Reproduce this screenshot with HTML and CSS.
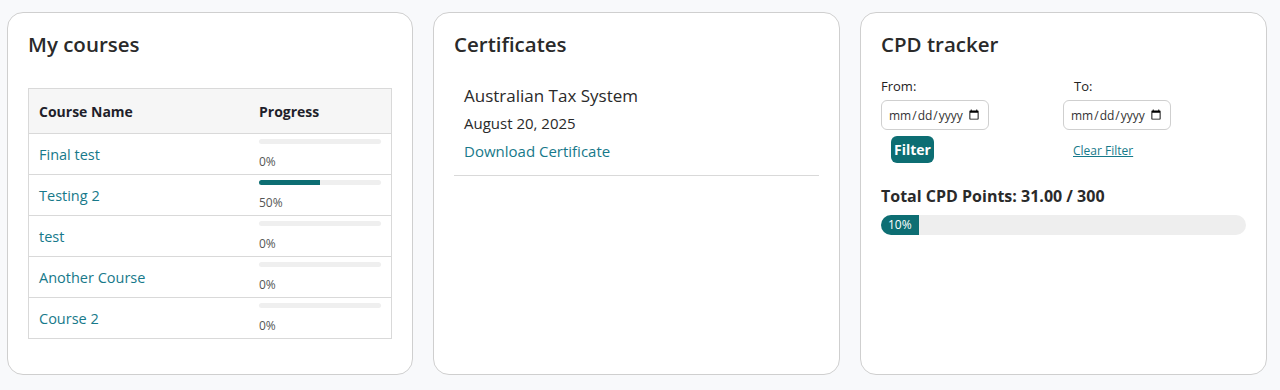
FILE: index.html
```html
<!DOCTYPE html>
<html lang="en">
<head>
    <meta charset="UTF-8">
    <title>Dashboard</title>
    <link rel="stylesheet" href="styles.css">
</head>
<body>
    <div class="dashboard">
        <div class="card">
            <h2>My courses</h2>
            <table class="courses">
                <thead>
                    <tr>
                        <th class="col-name">Course Name</th>
                        <th>Progress</th>
                    </tr>
                </thead>
                <tbody>
                    <tr>
                        <td><a href="#">Final test</a></td>
                        <td><div class="bar"><div class="fill" style="width: 0%"></div></div><span class="pct">0%</span></td>
                    </tr>
                    <tr>
                        <td><a href="#">Testing 2</a></td>
                        <td><div class="bar"><div class="fill" style="width: 50%"></div></div><span class="pct">50%</span></td>
                    </tr>
                    <tr>
                        <td><a href="#">test</a></td>
                        <td><div class="bar"><div class="fill" style="width: 0%"></div></div><span class="pct">0%</span></td>
                    </tr>
                    <tr>
                        <td><a href="#">Another Course</a></td>
                        <td><div class="bar"><div class="fill" style="width: 0%"></div></div><span class="pct">0%</span></td>
                    </tr>
                    <tr>
                        <td><a href="#">Course 2</a></td>
                        <td><div class="bar"><div class="fill" style="width: 0%"></div></div><span class="pct">0%</span></td>
                    </tr>
                </tbody>
            </table>
        </div>

        <div class="card">
            <h2>Certificates</h2>
            <div class="cert">
                <div class="cert-name">Australian Tax System</div>
                <div class="cert-date">August 20, 2025</div>
                <a href="#" class="cert-link">Download Certificate</a>
            </div>
        </div>

        <div class="card">
            <h2>CPD tracker</h2>
            <div class="filters">
                <div class="field">
                    <label>From:</label>
                    <input type="date">
                    <button class="btn">Filter</button>
                </div>
                <div class="field">
                    <label class="to">To:</label>
                    <input type="date">
                    <a href="#" class="clear">Clear Filter</a>
                </div>
            </div>
            <div class="total">Total CPD Points: 31.00 / 300</div>
            <div class="cpd-bar">
                <div class="cpd-fill" style="width: 10%">10%</div>
            </div>
        </div>
    </div>
</body>
</html>
```

FILE: styles.css
```css
body {
    margin: 0;
    background-color: #f8f9fb;
    font-family: "Open Sans", Arial, sans-serif;
    color: #222;
}

.dashboard {
    display: grid;
    grid-template-columns: 406px 407px 407px;
    gap: 20px;
    padding: 12px 13px 15px 7px;
}

.card {
    background: #fff;
    border: 1px solid #cfcfcf;
    border-radius: 16px;
    padding: 20px;
    height: 321px;
}

.card h2 {
    margin: 0;
    font-size: 20.5px;
    line-height: 22px;
    font-weight: 600;
    color: #2a2a2a;
}

/* my courses */
.courses {
    margin-top: 33px;
    width: 364px;
    border-collapse: collapse;
    border: 1px solid #d9d9d9;
}

.courses th {
    background: #f6f6f6;
    text-align: left;
    font-size: 14px;
    font-weight: 700;
    color: #1f1f2b;
    height: 44px;
    padding: 0 10px;
    border-bottom: 1px solid #d9d9d9;
}

.courses .col-name {
    width: 200px;
}

.courses td {
    height: 40px;
    padding: 0 10px;
    border-bottom: 1px solid #d9d9d9;
    vertical-align: middle;
}

.courses td a {
    color: #17798a;
    text-decoration: none;
    font-size: 14.5px;
}

.courses td:last-child {
    vertical-align: top;
}

.bar {
    width: 122px;
    height: 5px;
    margin-top: 5px;
    background: #efefef;
    border-radius: 3px;
    overflow: hidden;
}

.fill {
    height: 100%;
    background: #0d6e73;
}

.pct {
    display: block;
    margin-top: 10px;
    font-size: 12px;
    line-height: 15px;
    color: #555;
}

/* certificates */
.cert {
    margin-top: 30px;
    padding: 0 10px 14px;
    border-bottom: 1px solid #d9d9d9;
}

.cert-name {
    font-size: 17px;
    line-height: 22px;
    color: #2a2a2a;
}

.cert-date {
    margin-top: 6px;
    font-size: 15px;
    line-height: 20px;
    color: #2a2a2a;
}

.cert-link {
    display: block;
    margin-top: 8px;
    font-size: 15px;
    line-height: 20px;
    color: #17798a;
    text-decoration: none;
}

/* cpd tracker */
.filters {
    display: grid;
    grid-template-columns: 182px 182px;
    margin-top: 23px;
}

.field {
    display: flex;
    flex-direction: column;
    align-items: flex-start;
}

.field label {
    font-size: 13px;
    line-height: 16px;
    color: #222;
    margin-bottom: 6px;
}

.field label.to {
    padding-left: 11px;
}

.field input {
    width: 108px;
    height: 30px;
    box-sizing: border-box;
    border: 1px solid #cfcfcf;
    border-radius: 6px;
    padding: 0 6px;
    font-family: "Open Sans", Arial, sans-serif;
    font-size: 12px;
    color: #333;
}

.btn {
    margin: 6px 0 0 10px;
    background: #0d6e73;
    color: #fff;
    border: none;
    border-radius: 6px;
    height: 27px;
    padding: 0 3px;
    font-family: "Open Sans", Arial, sans-serif;
    font-size: 14px;
    font-weight: 700;
}

.clear {
    margin: 12px 0 0 10px;
    font-size: 12px;
    color: #17798a;
}

.total {
    margin-top: 22px;
    font-size: 16px;
    line-height: 22px;
    font-weight: 700;
    color: #2a2a2a;
}

.cpd-bar {
    margin-top: 8px;
    height: 20px;
    background: #eee;
    border-radius: 10px;
    overflow: hidden;
}

.cpd-fill {
    height: 100%;
    background: #0d6e73;
    color: #fff;
    font-size: 12px;
    line-height: 20px;
    padding-left: 7px;
    box-sizing: border-box;
    min-width: 38px;
}
```
